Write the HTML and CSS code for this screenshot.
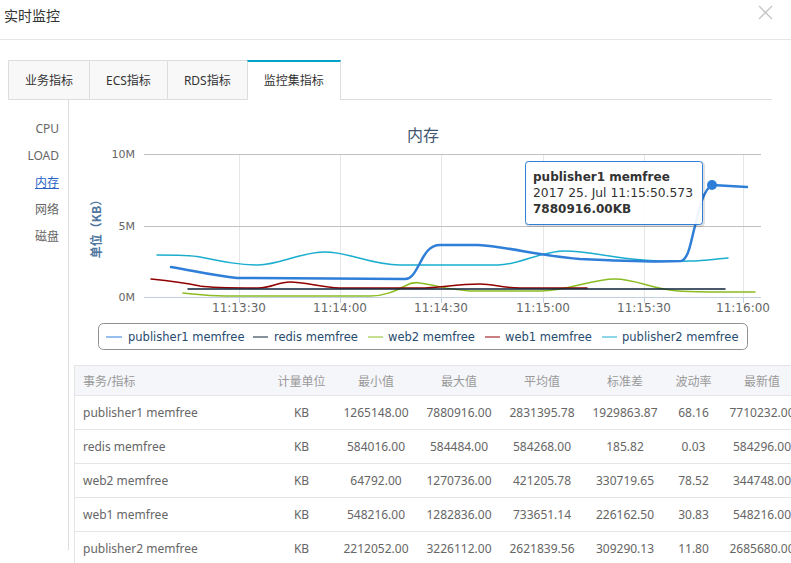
FILE: index.html
```html
<!DOCTYPE html>
<html lang="zh-CN">

<head>
    <meta charset="UTF-8">
    <meta name="viewport" content="width=device-width, initial-scale=1.0">
    <title>实时监控</title>
    <link rel="stylesheet" href="styles.css">
</head>

<body>
    <div class="dialog">
        <div class="dialog-head">
            <span class="dialog-title">实时监控</span>
            <svg class="close" width="15" height="15" viewBox="0 0 15 15">
                <path d="M1 1L14 14M14 1L1 14" />
            </svg>
        </div>

        <ul class="tabs">
            <li>业务指标</li>
            <li>ECS指标</li>
            <li>RDS指标</li>
            <li class="active">监控集指标</li>
        </ul>

        <div class="panel">
            <ul class="side">
                <li>CPU</li>
                <li>LOAD</li>
                <li><a href="#">内存</a></li>
                <li>网络</li>
                <li>磁盘</li>
            </ul>

            <div class="main">
                <!-- 内存曲线图 -->
                <svg class="chart" width="703" height="260" viewBox="69 100 703 260">
                    <text class="chart-title" x="423" y="141">内存</text>

                    <g class="grid-x">
                        <path d="M239.5 154V297M340.5 154V297M441.5 154V297M543.5 154V297M644.5 154V297M743.5 154V297" />
                    </g>
                    <g class="grid-y">
                        <path d="M144 154.5H761M144 226.5H761" />
                    </g>
                    <path class="axis-x" d="M144 297.5H761M239.5 297V303M340.5 297V303M441.5 297V303M543.5 297V303M644.5 297V303M743.5 297V303" />

                    <g class="y-labels">
                        <text x="135" y="158">10M</text>
                        <text x="135" y="230">5M</text>
                        <text x="135" y="301">0M</text>
                    </g>
                    <text class="y-title" transform="translate(101 226) rotate(-90)">单位（KB）</text>

                    <g class="x-labels">
                        <text x="239" y="312">11:13:30</text>
                        <text x="340" y="312">11:14:00</text>
                        <text x="441" y="312">11:14:30</text>
                        <text x="543" y="312">11:15:00</text>
                        <text x="644" y="312">11:15:30</text>
                        <text x="743" y="312">11:16:00</text>
                    </g>

                    <g class="series">
                        <path class="s-web2" d="M183 293C195 294 205 296 225 296L370 296C385 296 395 291 405 286C410 283 415 282 420 283C435 285 450 290 470 291L540 291C570 291 590 279 615 279C635 279 650 288 670 290C685 292 700 292 755 292" />
                        <path class="s-web1" d="M151 279C170 281 185 283 200 286C212 288 225 288 258 288C272 288 278 282 290 282C305 282 320 287 340 288L420 288C440 288 455 284 480 284C495 284 500 288 520 288L587 288" />
                        <path class="s-redis" d="M188 289H725" />
                        <path class="s-pub2" d="M157 255C175 255 190 255 200 257C225 262 240 265 258 265C280 265 300 252 325 252C350 252 370 265 400 265L498 265C520 265 540 251 565 251C590 251 610 258 643 260C660 261 670 262 690 261C705 261 715 259 728 258" />
                        <path class="s-pub1" d="M171 267C195 271 215 276 237 278L405 279C412 279 415 272 420 263C425 253 430 245 440 245L478 245C510 247 540 256 580 259C620 261 660 262 681 261C689 259 691 240 695 226C699 210 703 190 712 185L747 187" />
                        <circle class="dot" cx="712" cy="185" r="5" />
                    </g>

                    <g class="tooltip">
                        <rect class="tip-shadow" x="526.5" y="162.5" width="177" height="63" rx="3" />
                        <rect class="tip-box" x="525.5" y="161.5" width="177" height="63" rx="3" />
                        <text class="tip-strong" x="533" y="181">publisher1 memfree</text>
                        <text x="533" y="197" textLength="160" lengthAdjust="spacingAndGlyphs">2017 25. Jul 11:15:50.573</text>
                        <text class="tip-strong" x="533" y="213">7880916.00KB</text>
                    </g>

                    <g class="legend">
                        <rect x="98.5" y="323.5" width="649" height="26" rx="5" />
                        <path class="lg-pub1" d="M106 337H122" />
                        <text x="128" y="341">publisher1 memfree</text>
                        <path class="lg-redis" d="M253 337H268" />
                        <text x="274" y="341">redis memfree</text>
                        <path class="lg-web2" d="M368 337H383" />
                        <text x="388" y="341">web2 memfree</text>
                        <path class="lg-web1" d="M485 337H500" />
                        <text x="505" y="341">web1 memfree</text>
                        <path class="lg-pub2" d="M602 337H617" />
                        <text x="622" y="341">publisher2 memfree</text>
                    </g>
                </svg>

                <table class="stats">
                    <colgroup>
                        <col style="width: 194px">
                        <col style="width: 66px">
                        <col style="width: 83px">
                        <col style="width: 83px">
                        <col style="width: 83px">
                        <col style="width: 83px">
                        <col style="width: 54px">
                        <col style="width: 83px">
                    </colgroup>
                    <thead>
                        <tr>
                            <th>事务/指标</th>
                            <th>计量单位</th>
                            <th>最小值</th>
                            <th>最大值</th>
                            <th>平均值</th>
                            <th>标准差</th>
                            <th>波动率</th>
                            <th>最新值</th>
                        </tr>
                    </thead>
                    <tbody>
                        <tr>
                            <td>publisher1 memfree</td>
                            <td>KB</td>
                            <td>1265148.00</td>
                            <td>7880916.00</td>
                            <td>2831395.78</td>
                            <td>1929863.87</td>
                            <td>68.16</td>
                            <td>7710232.00</td>
                        </tr>
                        <tr>
                            <td>redis memfree</td>
                            <td>KB</td>
                            <td>584016.00</td>
                            <td>584484.00</td>
                            <td>584268.00</td>
                            <td>185.82</td>
                            <td>0.03</td>
                            <td>584296.00</td>
                        </tr>
                        <tr>
                            <td>web2 memfree</td>
                            <td>KB</td>
                            <td>64792.00</td>
                            <td>1270736.00</td>
                            <td>421205.78</td>
                            <td>330719.65</td>
                            <td>78.52</td>
                            <td>344748.00</td>
                        </tr>
                        <tr>
                            <td>web1 memfree</td>
                            <td>KB</td>
                            <td>548216.00</td>
                            <td>1282836.00</td>
                            <td>733651.14</td>
                            <td>226162.50</td>
                            <td>30.83</td>
                            <td>548216.00</td>
                        </tr>
                        <tr>
                            <td>publisher2 memfree</td>
                            <td>KB</td>
                            <td>2212052.00</td>
                            <td>3226112.00</td>
                            <td>2621839.56</td>
                            <td>309290.13</td>
                            <td>11.80</td>
                            <td>2685680.00</td>
                        </tr>
                    </tbody>
                </table>
            </div>
        </div>
    </div>
</body>

</html>
```

FILE: styles.css
```css
html,
body {
    margin: 0;
    overflow: hidden;
    background-color: #fff;
}

body {
    font-family: "Noto Sans", "Noto Sans CJK SC", sans-serif;
    font-size: 12px;
    color: #666;
}

ul {
    list-style: none;
    margin: 0;
    padding: 0;
}

/* 弹窗头部 */
.dialog-head {
    display: flex;
    justify-content: space-between;
    align-items: flex-start;
    height: 39px;
    border-bottom: 1px solid #e5e5e5;
}

.dialog-title {
    margin: 8px 0 0 4px;
    font-size: 14px;
    line-height: 16px;
    color: #333;
}

.close {
    margin: 5px 18px 0 0;
}

.close path {
    stroke: #c4c4c4;
    stroke-width: 1.3;
    fill: none;
}

/* 选项卡 */
.tabs {
    display: flex;
    margin: 20px 19px 0 8px;
    border-bottom: 1px solid #ddd;
}

.tabs li {
    box-sizing: border-box;
    height: 39px;
    padding: 0 16px;
    line-height: 39px;
    color: #333;
    background-color: #f8f8f8;
    border: 1px solid #ddd;
    border-bottom: none;
    margin-left: -1px;
}

.tabs li:first-child {
    margin-left: 0;
}

.tabs li.active {
    height: 40px;
    margin-bottom: -1px;
    background-color: #fff;
    border-top: 2px solid #00a2ca;
    line-height: 37px;
}

/* 左侧菜单 + 内容 */
.panel {
    display: flex;
}

.side {
    flex: none;
    box-sizing: border-box;
    width: 69px;
    height: 450px;
    padding-top: 15px;
    padding-right: 9px;
    border-right: 1px solid #ddd;
    text-align: right;
}

.side li {
    height: 27px;
    line-height: 27px;
    color: #666;
}

.side a {
    color: #2a62c4;
    text-decoration: underline;
}

.main {
    flex: 1;
    min-width: 0;
}

/* 图表 */
.chart {
    display: block;
    font-family: "DejaVu Sans", sans-serif;
}

.chart-title {
    font-family: "Noto Sans CJK SC", sans-serif;
    font-size: 16px;
    fill: #3e576f;
    text-anchor: middle;
}

.grid-x path {
    stroke: #e6e6e6;
    fill: none;
}

.grid-y path {
    stroke: #c0c0c0;
    fill: none;
}

.axis-x {
    stroke: #c0d0e0;
    fill: none;
}

.y-labels text {
    font-size: 11px;
    fill: #666;
    text-anchor: end;
}

.y-title {
    font-family: "Noto Sans CJK SC", sans-serif;
    font-size: 12px;
    font-weight: bold;
    fill: #4d759e;
    text-anchor: middle;
}

.x-labels text {
    font-size: 12px;
    fill: #666;
    text-anchor: middle;
}

.series path {
    fill: none;
    stroke-width: 1.5;
    stroke-linejoin: round;
    stroke-linecap: round;
}

.series .s-pub1 {
    stroke: #2f7ed8;
    stroke-width: 2.5;
}

.s-pub2 {
    stroke: #1aadce;
}

.s-redis {
    stroke: #0d233a;
}

.s-web2 {
    stroke: #8bbc21;
}

.s-web1 {
    stroke: #910000;
}

.dot {
    fill: #2f7ed8;
}

.tip-shadow {
    fill: none;
    stroke: rgba(0, 0, 0, 0.12);
    stroke-width: 3;
}

.tip-box {
    fill: rgba(255, 255, 255, 0.92);
    stroke: #2f7ed8;
    stroke-width: 1;
}

.tooltip text {
    font-size: 12px;
    fill: #333;
}

.tooltip .tip-strong {
    font-weight: bold;
}

.legend rect {
    fill: none;
    stroke: #909090;
}

.legend path {
    stroke-width: 2;
}

.legend text {
    font-size: 11.5px;
    fill: #274b6d;
}

.lg-pub1 {
    stroke: #97bfee;
}

.lg-redis {
    stroke: #86919b;
}

.lg-web2 {
    stroke: #c5de90;
}

.lg-web1 {
    stroke: #c88080;
}

.lg-pub2 {
    stroke: #8dd6e7;
}

/* 统计表 */
.stats {
    table-layout: fixed;
    width: 729px;
    margin: 5px 0 0 5px;
    border-collapse: collapse;
    border-left: 1px solid #e5e5e5;
    border-top: 1px solid #e5e5e5;
}

.stats th,
.stats td {
    padding: 0;
    text-align: center;
    white-space: nowrap;
    border-bottom: 1px solid #e5e5e5;
}

.stats th {
    height: 29px;
    font-weight: normal;
    color: #999;
    background-color: #f5f6fa;
}

.stats td {
    height: 33px;
    color: #666;
}

.stats th:first-child,
.stats td:first-child {
    text-align: left;
    padding-left: 8px;
}
```
